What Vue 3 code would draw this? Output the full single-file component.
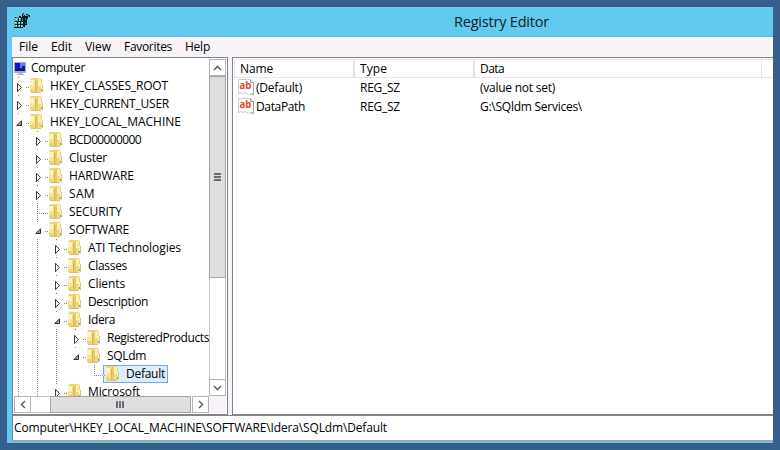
<script setup>
const menus = [
  { label: 'File', w: 19, slot: 32 },
  { label: 'Edit', w: 21, slot: 34 },
  { label: 'View', w: 26, slot: 39 },
  { label: 'Favorites', w: 48, slot: 61 },
  { label: 'Help', w: 25, slot: 40 },
]

// guides: for each column left of the icon, which dotted connector is drawn
// '|' full line, 'L' corner ending at this row, ' ' nothing
const tree = [
  { label: 'HKEY_CLASSES_ROOT', w: 118, guides: '|', state: 'closed' },
  { label: 'HKEY_CURRENT_USER', w: 119, guides: '|', state: 'closed' },
  { label: 'HKEY_LOCAL_MACHINE', w: 131, guides: '|', state: 'open' },
  { label: 'BCD00000000', w: 72, guides: '||', state: 'closed' },
  { label: 'Cluster', w: 38, guides: '||', state: 'closed' },
  { label: 'HARDWARE', w: 65, guides: '||', state: 'closed' },
  { label: 'SAM', w: 26, guides: '||', state: 'closed' },
  { label: 'SECURITY', w: 53, guides: '||', state: 'none' },
  { label: 'SOFTWARE', w: 60, guides: '||', state: 'open' },
  { label: 'ATI Technologies', w: 93, guides: '|||', state: 'closed' },
  { label: 'Classes', w: 39, guides: '|||', state: 'closed' },
  { label: 'Clients', w: 37, guides: '|||', state: 'closed' },
  { label: 'Description', w: 60, guides: '|||', state: 'closed' },
  { label: 'Idera', w: 27, guides: '|||', state: 'open' },
  { label: 'RegisteredProducts', w: 102, guides: '||||', state: 'closed' },
  { label: 'SQLdm', w: 39, guides: '|||L', state: 'open' },
  { label: 'Default', w: 39, guides: '||| L', state: 'none', selected: true },
  { label: 'Microsoft', w: 52, guides: '|||', state: 'closed' },
]

const values = [
  { name: '(Default)', nw: 46, type: 'REG_SZ', data: '(value not set)', dw: 75 },
  { name: 'DataPath', nw: 49, type: 'REG_SZ', data: 'G:\\SQldm Services\\', dw: 102 },
]

const path = 'Computer\\HKEY_LOCAL_MACHINE\\SOFTWARE\\Idera\\SQLdm\\Default'

// Spreads a label's letters so that it takes the given width
const vFit = {
  mounted(el, { value }) {
    const natural = el.getBoundingClientRect().width
    el.style.letterSpacing = (value - natural) / el.textContent.length + 'px'
  },
}
</script>

<template>
  <div class="desktop">
    <div class="window">
      <header class="titlebar">
        <svg class="app-icon" width="17" height="16" viewBox="0 0 17 16" shape-rendering="crispEdges">
          <path d="M0 5h1V4h4V3h2V4h1V1h1V0h1v2h1v1h1V1h2v1h2v2h-2v2h-1v6h-2v2h-2v1H0z" fill="#0b1a1c" />
          <path d="M1 5h3v3H1zM5 5h2v3H5zM1 9h2v2H1zM4 9h2v2H4zM7 9h2v2H7zM1 12h2v2H1zM4 12h2v2H4zM7 12h2v2H7z" fill="#35d6d2" />
          <path d="M2 6h1v1H2zM5 5h1v1H5zM1 9h1v1H1zM5 9h1v1H5zM8 9h1v1H8zM2 12h1v1H2zM5 12h1v1H5zM7 13h1v1H7z" fill="#e5ffff" />
          <path d="M8 5h1v3H8zM11 5h1v2h-1zM11 9h1v2h-1z" fill="#0b8084" />
          <path d="M0 5h1v9H0zM2 4h3v1H2zM9 1h1v2H9zM12 2h2v1h-2zM14 3h1v1h-1z" fill="#809294" />
        </svg>
        <span class="title"><span v-fit="95">Registry Editor</span></span>
      </header>

      <main class="client">
        <nav class="menubar">
          <span v-for="m in menus" :key="m.label" class="menu" :style="{ width: m.slot + 'px' }">
            <span v-fit="m.w">{{ m.label }}</span>
          </span>
        </nav>

        <div class="panes">
          <section class="tree-pane">
            <div class="tree">
              <div class="row root">
                <svg width="14" height="15" viewBox="0 0 14 15" shape-rendering="crispEdges">
                  <rect x="0" y="1" width="12" height="11" fill="#a9b1bd" />
                  <rect x="1" y="2" width="10" height="8" fill="#1818b8" />
                  <path d="M1 2h5v4H1z" fill="#1010ee" />
                  <path d="M6 2h5v3H8v2H6z" fill="#5b86e2" />
                  <path d="M1 8h10v2H1z" fill="#151580" />
                  <path d="M4 12h5v1h1v1H3v-1h1z" fill="#b9bdc3" />
                </svg>
                <span class="label"><span v-fit="54">Computer</span></span>
              </div>
              <div v-for="node in tree" :key="node.label" class="row">
                <span
                  v-for="(g, i) in node.guides"
                  :key="i"
                  class="guide"
                  :class="{ line: g === '|', corner: g === 'L', own: i === node.guides.length - 1 }"
                >
                  <svg
                    v-if="i === node.guides.length - 1 && node.state !== 'none'"
                    class="arrow" width="9" height="15" viewBox="0 0 9 15"
                  >
                    <path v-if="node.state === 'closed'" d="M1.5 4.3V12.7L5.4 8.5Z" fill="#fff" stroke="#3c3c3c" />
                    <path v-else d="M.8 10.5H5.5V5.8Z" fill="#a0a0a0" stroke="#303030" />
                  </svg>
                </span>
                <span class="item" :class="{ selected: node.selected }">
                  <svg class="folder" width="14" height="15" viewBox="0 0 14 15" shape-rendering="crispEdges">
                    <path d="M0 1h1V0h10v1h1v5h1v8h-2v1H2v-1H0z" fill="#ecd57c" />
                    <path d="M0 2h4v5H0z" fill="#fdf5bf" />
                    <path d="M0 7h4v4H0z" fill="#f8e693" />
                    <path d="M0 11h4v3H0z" fill="#efd470" />
                    <path d="M4 2h1v12H4z" fill="#f5e08a" />
                    <path d="M5 3h1v11H5z" fill="#d3b458" />
                    <path d="M6 1h2v13H6z" fill="#e6cb6c" />
                    <path d="M8 1h3v7H8z" fill="#fbf0ab" />
                    <path d="M8 8h3v6H8z" fill="#f1d977" />
                    <path d="M11 2h1v4h-1z" fill="#e9d27a" />
                    <path d="M11 6h1v8h-1z" fill="#fbf3cc" />
                    <path d="M11 11h1v2h-1z" fill="#4da9c9" />
                    <path d="M12 6h1v8h-1z" fill="#dcc67a" />
                    <path d="M1 14h10v1H1z" fill="#dcc06a" />
                  </svg>
                  <span class="label"><span v-fit="node.w">{{ node.label }}</span></span>
                </span>
              </div>
            </div>

            <div class="vbar">
              <span class="btn">
                <svg width="9" height="6" viewBox="0 0 9 6"><path d="M1 5L4.5 1.4L8 5" /></svg>
              </span>
              <span class="vthumb"><i></i><i></i><i></i></span>
              <span class="vtrack"></span>
              <span class="btn">
                <svg width="9" height="6" viewBox="0 0 9 6"><path d="M1 1L4.5 4.6L8 1" /></svg>
              </span>
            </div>

            <div class="hbar">
              <span class="btn">
                <svg width="6" height="9" viewBox="0 0 6 9"><path d="M5 1L1.4 4.5L5 8" /></svg>
              </span>
              <span class="htrack"></span>
              <span class="hthumb"><i></i><i></i><i></i></span>
              <span class="btn">
                <svg width="6" height="9" viewBox="0 0 6 9"><path d="M1 1L4.6 4.5L1 8" /></svg>
              </span>
            </div>
            <div class="grip"></div>
          </section>

          <section class="list-pane">
            <div class="list-row head">
              <span class="name"><span v-fit="33">Name</span></span>
              <span class="type"><span v-fit="27">Type</span></span>
              <span class="data"><span v-fit="24">Data</span></span>
              <span class="rest"></span>
            </div>
            <div v-for="v in values" :key="v.name" class="list-row">
              <span class="name">
                <svg width="17" height="17" viewBox="0 0 17 17">
                  <path d="M.5 .5H12.5L15.5 3.5V15.5L12.5 14.5L10.5 15.5L7.5 13.5L4.5 14.5L3.5 13.5L.5 14.5Z" fill="#fff" stroke="#c9c9c9" />
                  <path d="M12.5 .5V3.5H15.5V15.5L12.5 14.5" fill="none" stroke="#a2a2a6" />
                  <text x="1.6" y="10.3" textLength="11.8" lengthAdjust="spacingAndGlyphs">ab</text>
                </svg>
                <span v-fit="v.nw">{{ v.name }}</span>
              </span>
              <span class="type"><span v-fit="40">{{ v.type }}</span></span>
              <span class="data"><span v-fit="v.dw">{{ v.data }}</span></span>
            </div>
          </section>
        </div>

        <footer class="status"><span v-fit="373">{{ path }}</span></footer>
      </main>
    </div>
  </div>
</template>

<style>
body {
  margin: 0;
  overflow: hidden;
}
</style>

<style scoped>
* {
  box-sizing: border-box;
}
.desktop {
  width: 780px;
  height: 450px;
  padding: 7px;
  background: #365f8d;
  font: 12px/18px "Open Sans", "Noto Sans", sans-serif;
  color: #000;
  white-space: pre;
}
.window {
  display: flex;
  flex-direction: column;
  width: 766px;
  height: 436px;
  padding-left: 5px;
  background: #62caf0;
}
.titlebar {
  display: flex;
  flex: none;
  height: 30px;
  padding: 7px 0 0 2px;
  border-bottom: 1px solid #6cb3d5;
}
.app-icon {
  margin-top: -1px;
}
.title {
  margin-left: 423px;
  margin-top: -2px;
  font-size: 14.5px;
  line-height: 20px;
  color: #10202a;
}
.client {
  display: flex;
  flex-direction: column;
  height: 402px;
  background: #f7f3f7;
}
.menubar {
  display: flex;
  flex: none;
  height: 20px;
  padding-left: 7px;
  line-height: 20px;
}
.menu {
  flex: none;
}
.panes {
  display: flex;
  flex: none;
  gap: 4px;
  height: 358px;
}
.tree-pane {
  display: grid;
  grid-template-columns: 195px 17px;
  grid-template-rows: 337px 17px;
  flex: none;
  width: 216px;
  height: 358px;
  padding: 1px 0 0 1px;
  border: 1px solid #84828f;
  background: #fff;
}
.tree {
  overflow: hidden;
  min-width: 0;
}
.row {
  display: flex;
  height: 18px;
}
.root {
  padding-top: 1px;
}
.root svg {
  flex: none;
  margin-top: 1px;
}
.root .label {
  margin-left: 3px;
  line-height: 16px;
}
.guide {
  position: relative;
  flex: none;
  width: 19px;
  height: 18px;
}
.guide:nth-child(1) {
  width: 16px;
}
.guide::before {
  content: "";
  position: absolute;
  right: 11px;
  top: 0;
  width: 1px;
  height: 18px;
}
.line::before,
.corner::before {
  background: repeating-linear-gradient(#858585 0 1px, #fff 1px 2px);
}
.corner::before {
  height: 10px;
}
.own::after {
  content: "";
  position: absolute;
  right: 1px;
  top: 10px;
  width: 11px;
  height: 1px;
  background: repeating-linear-gradient(90deg, #858585 0 1px, #fff 1px 2px);
}
.arrow {
  position: absolute;
  right: 5px;
  top: 2px;
  z-index: 1;
  background: #fff;
}
.item {
  display: flex;
  flex: none;
}
.folder {
  flex: none;
  margin-top: 1px;
}
.label {
  margin-left: 6px;
  line-height: 18px;
}
.selected {
  height: 18px;
  margin-left: -3px;
  padding: 0 2px 0 2px;
  border: 1px solid #7da7dc;
  background: #dcedff;
}
.selected .folder {
  margin-top: 0;
}
.selected .label {
  line-height: 16px;
}
.vbar {
  display: flex;
  flex-direction: column;
  width: 17px;
}
.hbar {
  display: flex;
  height: 17px;
}
.btn {
  display: flex;
  flex: none;
  align-items: center;
  justify-content: center;
  width: 17px;
  height: 17px;
  border: 1px solid #b5b3b7;
  background: #fff;
}
.btn path {
  fill: none;
  stroke: #606064;
  stroke-width: 1.5;
}
.vthumb,
.hthumb {
  display: flex;
  flex: none;
  align-items: center;
  justify-content: center;
  gap: 1px;
  border: 1px solid #a5a3a5;
  background: #dedede;
}
.vthumb {
  flex-direction: column;
  height: 202px;
}
.vthumb i {
  width: 7px;
  height: 2px;
  background: #6c6c70;
}
.hthumb {
  width: 141px;
  padding-right: 2px;
}
.hthumb i {
  width: 2px;
  height: 7px;
  background: #6c6c70;
}
.vtrack {
  flex: 1;
  border: solid #c8c6c9;
  border-width: 0 1px;
}
.htrack {
  flex: none;
  width: 19px;
  border: solid #c8c6c9;
  border-width: 1px 0;
}
.hthumb + .btn {
  margin-left: 1px;
}
.grip {
  background: #f7f3f7;
}
.list-pane {
  flex: 1;
  height: 358px;
  padding: 1px 0 0 1px;
  border: 1px solid #84828f;
  border-right: 0;
  background: #fff;
}
.list-row {
  display: flex;
  height: 19px;
  line-height: 19px;
}
.name {
  display: flex;
  flex: none;
  width: 120px;
  padding-left: 4px;
}
.name svg {
  flex: none;
  width: 17px;
  margin-right: 1px;
  margin-top: 1px;
}
.name text {
  font: bold 11px "Open Sans", sans-serif;
  fill: #de4a26;
}
.type {
  flex: none;
  width: 120px;
  padding-left: 6px;
}
.data {
  flex: none;
  width: 288px;
  padding-left: 6px;
}
.head > span {
  border: 1px solid #e7e3e7;
}
.head .name,
.head .type,
.head .data {
  padding-left: 5px;
  line-height: 18px;
}
.head .rest {
  flex: 1;
  border-width: 1px 0;
}
.status {
  flex: 1;
  padding-left: 1px;
  border: solid #84828f;
  border-width: 1px 0 2px 1px;
  border-bottom-color: #a7a4ad;
  background: #fff;
  line-height: 24px;
}
</style>
